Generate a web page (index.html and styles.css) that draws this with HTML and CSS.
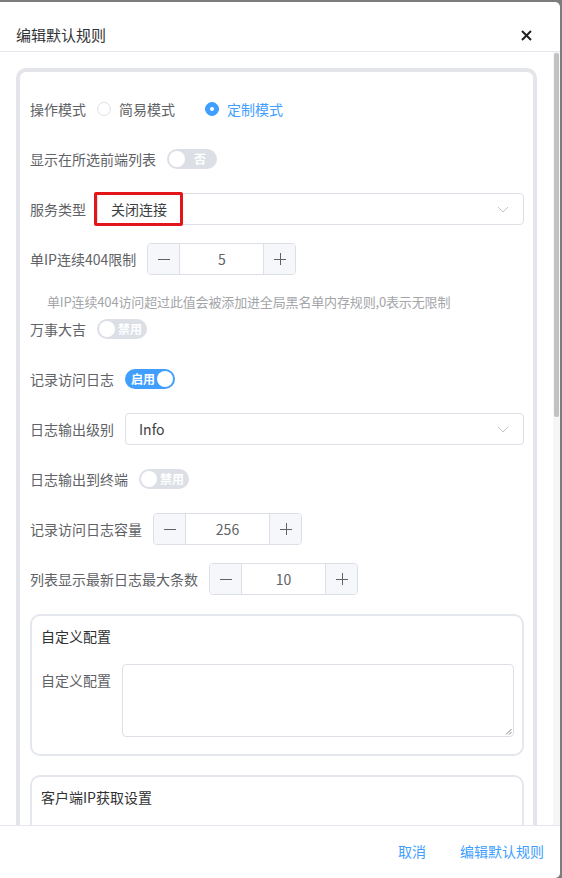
FILE: index.html
```html
<!DOCTYPE html>
<html lang="zh">
<head>
  <meta charset="UTF-8" />
  <title>编辑默认规则</title>
  <link rel="stylesheet" href="styles.css">
</head>
<body>

<div class="dialog">
  <div class="dialog-header">
    <span class="dialog-title">编辑默认规则</span>
    <svg class="close" width="11" height="11" viewBox="0 0 11 11"><path d="M1 1L10 10M10 1L1 10" stroke="#1f1f1f" stroke-width="2"/></svg>
  </div>

  <div class="dialog-body">
    <div class="card">
      <div class="row">
        <span class="label">操作模式</span>
        <span class="radio"><i class="dot"></i>简易模式</span>
        <span class="radio checked"><i class="dot"></i>定制模式</span>
      </div>

      <div class="row">
        <span class="label">显示在所选前端列表</span>
        <span class="switch"><i class="knob"></i><em>否</em></span>
      </div>

      <div class="row">
        <span class="label">服务类型</span>
        <div class="select">
          <span>关闭连接</span>
          <svg width="12" height="7" viewBox="0 0 12 7"><path d="M1 1L6 6L11 1" fill="none" stroke="#c0c4cc" stroke-width="1"/></svg>
          <div class="mark"></div>
        </div>
      </div>

      <div class="row tight">
        <span class="label">单IP连续404限制</span>
        <div class="number">
          <span class="btn"><svg width="12" height="12" viewBox="0 0 12 12"><path d="M0 6.5H12" stroke="#606266"/></svg></span>
          <span class="value">5</span>
          <span class="btn"><svg width="12" height="12" viewBox="0 0 12 12"><path d="M0 6.5H12M6.5 0V12" stroke="#606266"/></svg></span>
        </div>
      </div>
      <p class="help">单IP连续404访问超过此值会被添加进全局黑名单内存规则,0表示无限制</p>

      <div class="row">
        <span class="label">万事大吉</span>
        <span class="switch"><i class="knob"></i><em>禁用</em></span>
      </div>

      <div class="row">
        <span class="label">记录访问日志</span>
        <span class="switch on"><em>启用</em><i class="knob"></i></span>
      </div>

      <div class="row">
        <span class="label">日志输出级别</span>
        <div class="select">
          <span>Info</span>
          <svg width="12" height="7" viewBox="0 0 12 7"><path d="M1 1L6 6L11 1" fill="none" stroke="#c0c4cc" stroke-width="1"/></svg>
        </div>
      </div>

      <div class="row">
        <span class="label">日志输出到终端</span>
        <span class="switch"><i class="knob"></i><em>禁用</em></span>
      </div>

      <div class="row">
        <span class="label">记录访问日志容量</span>
        <div class="number">
          <span class="btn"><svg width="12" height="12" viewBox="0 0 12 12"><path d="M0 6.5H12" stroke="#606266"/></svg></span>
          <span class="value">256</span>
          <span class="btn"><svg width="12" height="12" viewBox="0 0 12 12"><path d="M0 6.5H12M6.5 0V12" stroke="#606266"/></svg></span>
        </div>
      </div>

      <div class="row">
        <span class="label">列表显示最新日志最大条数</span>
        <div class="number">
          <span class="btn"><svg width="12" height="12" viewBox="0 0 12 12"><path d="M0 6.5H12" stroke="#606266"/></svg></span>
          <span class="value">10</span>
          <span class="btn"><svg width="12" height="12" viewBox="0 0 12 12"><path d="M0 6.5H12M6.5 0V12" stroke="#606266"/></svg></span>
        </div>
      </div>

      <div class="group">
        <h3>自定义配置</h3>
        <div class="field">
          <span class="field-label">自定义配置</span>
          <div class="textarea">
            <svg class="grip" width="7" height="7" viewBox="0 0 7 7"><path d="M6.5 1L1 6.5M6.5 4L4 6.5" stroke="#888" stroke-width="1"/></svg>
          </div>
        </div>
      </div>

      <div class="group">
        <h3>客户端IP获取设置</h3>
        <div class="spacer"></div>
      </div>
    </div>

    <div class="scrollbar"><div class="thumb"></div></div>
  </div>

  <div class="dialog-footer">
    <a class="text-btn">取消</a>
    <a class="text-btn">编辑默认规则</a>
  </div>
</div>

</body>
</html>
```

FILE: styles.css
```css
html, body {
  margin: 0;
  padding: 0;
  height: 100%;
}
body {
  background: #7d7d7d;
  font-family: "Noto Sans CJK SC", "Noto Sans", sans-serif;
  font-size: 14px;
  color: #606266;
  overflow: hidden;
}
.dialog {
  background: #fff;
  margin: 2px 2px 0 0;
  height: 876px;
  border-radius: 0 5px 5px 0;
  display: flex;
  flex-direction: column;
  overflow: hidden;
}
.dialog-header {
  height: 50px;
  box-sizing: border-box;
  padding: 23px 28px 0 16px;
  border-bottom: 1px solid #e4e7ed;
  display: flex;
  justify-content: space-between;
  align-items: flex-start;
}
.dialog-title {
  font-size: 15px;
  line-height: 20px;
  color: #303133;
}
.close {
  margin-top: 5px;
}
.dialog-body {
  flex: 1;
  position: relative;
  overflow: hidden;
  padding: 16px 23px 0 16px;
}
.card {
  border: 4px solid #e3e5ea;
  border-radius: 10px;
  padding: 21px 9px 0 10px;
}
.row {
  display: flex;
  align-items: center;
  height: 32px;
  margin-bottom: 18px;
}
.row.tight {
  margin-bottom: 17px;
}
.label {
  margin-right: 11px;
  white-space: nowrap;
}
.radio {
  display: inline-flex;
  align-items: center;
  margin-right: 30px;
}
.radio .dot {
  width: 14px;
  height: 14px;
  box-sizing: border-box;
  border: 1px solid #dcdfe6;
  border-radius: 50%;
  margin-right: 8px;
  background: #fff;
}
.radio.checked {
  color: #409eff;
}
.radio.checked .dot {
  background: #409eff;
  border-color: #409eff;
  position: relative;
}
.radio.checked .dot::after {
  content: "";
  position: absolute;
  left: 4px;
  top: 4px;
  width: 4px;
  height: 4px;
  border-radius: 50%;
  background: #fff;
}
.switch {
  width: 50px;
  height: 20px;
  box-sizing: border-box;
  border-radius: 10px;
  background: #dcdfe6;
  display: flex;
  align-items: center;
  padding: 0 2px;
}
.switch.on {
  background: #409eff;
  padding-left: 6px;
}
.knob {
  width: 16px;
  height: 16px;
  border-radius: 50%;
  background: #fff;
  flex: none;
}
.switch em {
  flex: 1;
  font-style: normal;
  font-size: 12px;
  font-weight: bold;
  color: #fff;
  text-align: center;
  line-height: 20px;
}
.switch.on em {
  text-align: left;
}
.select {
  flex: 1;
  height: 32px;
  box-sizing: border-box;
  border: 1px solid #dcdfe6;
  border-radius: 4px;
  display: flex;
  align-items: center;
  justify-content: space-between;
  padding: 0 14px 0 13px;
  color: #3c3e42;
  position: relative;
}
.mark {
  position: absolute;
  left: -4px;
  top: -2px;
  width: 89px;
  height: 34px;
  box-sizing: border-box;
  border: 3px solid #e3151a;
  border-radius: 2px;
}
.number {
  width: 149px;
  height: 32px;
  box-sizing: border-box;
  border: 1px solid #dcdfe6;
  border-radius: 4px;
  display: flex;
  overflow: hidden;
}
.number .btn {
  width: 31px;
  background: #f5f7fa;
  display: flex;
  align-items: center;
  justify-content: center;
}
.number .btn:first-child {
  border-right: 1px solid #dcdfe6;
}
.number .btn:last-child {
  border-left: 1px solid #dcdfe6;
}
.number .value {
  flex: 1;
  text-align: center;
  line-height: 30px;
}
.help {
  margin: 0 0 1px;
  padding-left: 17px;
  font-size: 13px;
  letter-spacing: -0.15px;
  line-height: 20px;
  color: #a3a5a9;
}
.group {
  border: 2px solid #e4e7ed;
  border-radius: 10px;
  margin: 19px 0 16px;
  padding: 10px 8px 17px 9px;
}
.group h3 {
  margin: 0 0 18px;
  font-size: 14px;
  font-weight: normal;
  line-height: 20px;
  color: #303133;
}
.field {
  display: flex;
}
.field-label {
  width: 81px;
  line-height: 32px;
}
.textarea {
  flex: 1;
  height: 73px;
  box-sizing: border-box;
  border: 1px solid #dcdfe6;
  border-radius: 4px;
  position: relative;
}
.grip {
  position: absolute;
  right: 1px;
  bottom: 1px;
}
.spacer {
  height: 73px;
}
.scrollbar {
  position: absolute;
  right: 0;
  top: 0;
  bottom: 0;
  width: 7px;
  background: #f6f6f6;
}
.thumb {
  margin: 1px 0 0 1px;
  width: 5px;
  height: 364px;
  border-radius: 2px;
  background: #c2c2c2;
}
.dialog-footer {
  height: 53px;
  box-sizing: border-box;
  border-top: 1px solid #e4e7ed;
  display: flex;
  justify-content: flex-end;
  align-items: center;
  padding: 0 16px 2px;
}
.text-btn {
  color: #409eff;
  margin-left: 34px;
}
```
